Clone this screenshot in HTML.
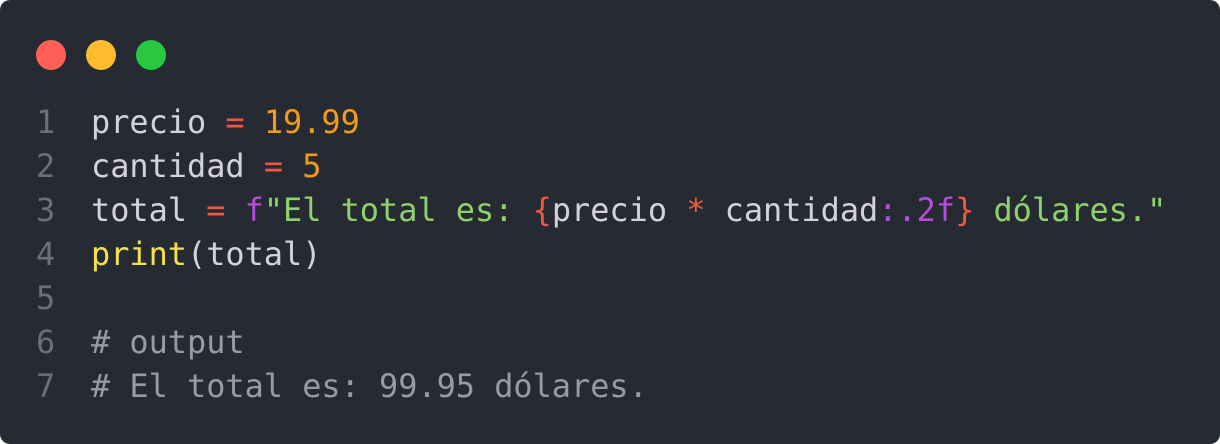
<!DOCTYPE html>
<html><head><meta charset="utf-8"><style>
html,body{margin:0;padding:0;background:#fff;}
.win{position:absolute;left:0;top:0;width:1220px;height:444px;background:#262a33;border-radius:10px;overflow:hidden;}
.dot{position:absolute;top:40px;width:30px;height:30px;border-radius:50%;}
pre{position:absolute;top:100px;margin:0;font-family:"DejaVu Sans Mono","Liberation Mono",monospace;font-size:31.9px;line-height:44px;color:#d6d2dc;}
.n{color:#6e6e76}.o{color:#f0583f}.num{color:#f29a1a}.f{color:#b54ed8}.s{color:#8fd16a}.y{color:#f5e050}.c{color:#9a9aa2}
</style></head><body><div class="win">
<div class="dot" style="left:36px;background:#ff5f57"></div>
<div class="dot" style="left:86px;background:#febc2e"></div>
<div class="dot" style="left:136px;background:#28c840"></div>
<pre class="n" style="left:36px">1
2
3
4
5
6
7</pre>
<pre style="left:91px">precio <span class="o">=</span> <span class="num">19.99</span>
cantidad <span class="o">=</span> <span class="num">5</span>
total <span class="o">=</span> <span class="f">f</span><span class="s">"El total es: </span><span class="o">{</span>precio <span class="o">*</span> cantidad<span class="f">:.2f</span><span class="o">}</span><span class="s"> dólares."</span>
<span class="y">print</span>(total)

<span class="c"># output</span>
<span class="c"># El total es: 99.95 dólares.</span></pre>
</div></body></html>
